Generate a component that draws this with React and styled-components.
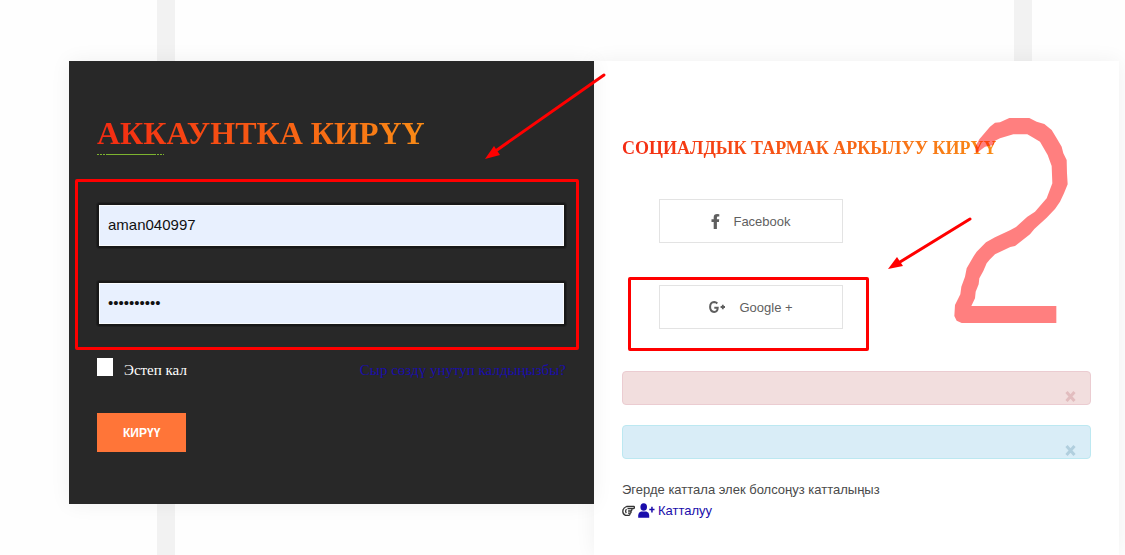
import styled, { createGlobalStyle } from 'styled-components';

const GlobalStyle = createGlobalStyle`
  *, *::before, *::after {
    box-sizing: border-box;
  }
  body {
    margin: 0;
    background: #fefefe;
    color: #4a4a4a;
    font-family: 'Liberation Sans', Arial, sans-serif;
    font-size: 13px;
    line-height: 21px;
  }
`;

const serif = "'Liberation Serif', 'Times New Roman', serif";

const Page = styled.div`
  position: relative;
  isolation: isolate;
  display: grid;
  grid-template-columns: 1fr 1fr;
  min-height: 100vh;
  padding: 61px 6px 0 69px;
  overflow: hidden;
`;

const Stripes = styled.div`
  position: absolute;
  inset: 0;
  z-index: -1;
  display: flex;
  justify-content: space-between;
  padding: 0 93px 0 157px;
`;

const Stripe = styled.div`
  width: 18px;
  background: #f2f2f2;
`;

const Panel = styled.section`
  position: relative;
  padding: 0 28px;
  box-shadow: 0 0 20px rgba(0, 0, 0, 0.06);
`;

const LoginPanel = styled(Panel)`
  z-index: 1;
  align-self: start;
  padding-top: 51px;
  padding-bottom: 52px;
  background: #282828;
  color: #fff;
  font-family: ${serif};
`;

const SocialPanel = styled(Panel)`
  padding-top: 75px;
  background: #fff;
`;

const Title = styled.h1`
  width: fit-content;
  margin: 0;
  background: linear-gradient(90deg, #f42a12, #f98b16);
  background-clip: text;
  color: transparent;
  font-family: ${serif};
  font-size: 32px;
  font-weight: 700;
  line-height: 42px;
  white-space: nowrap;
`;

const Subtitle = styled(Title).attrs({ as: 'h2' })`
  font-size: 18px;
  line-height: 24px;
`;

const Underline = styled.div`
  width: 67px;
  height: 1px;
  background:
    linear-gradient(#7db32f, #7db32f) center / 48px 1px no-repeat,
    repeating-linear-gradient(90deg, #7db32f 0 2px, transparent 2px 3px);
`;

const Fields = styled.div`
  position: relative;
  display: grid;
  gap: 33px;
  margin: 48px 0 32px;
`;

const Input = styled.input`
  width: 100%;
  height: 45px;
  padding: 0 9px 2px;
  border: 2px solid #181818;
  border-radius: 2px;
  outline: 1px solid #202020;
  background: #e8f0fe;
  box-shadow: inset 0 0 0 1px #f8fafc;
  color: #111;
  font-family: 'Liberation Sans', Arial, sans-serif;
  font-size: 15px;
`;

const Frame = styled.div`
  position: absolute;
  inset: ${({ $inset }) => $inset};
  border: 3px solid #f00;
  border-radius: 2px;
  pointer-events: none;
`;

const Drawing = styled.svg`
  position: absolute;
  top: ${({ $top }) => $top}px;
  left: ${({ $left }) => $left}px;
  overflow: visible;
  pointer-events: none;
`;

const Options = styled.div`
  display: flex;
  justify-content: space-between;
  font-size: 15px;
  line-height: 25px;
`;

const Remember = styled.label`
  display: flex;
  gap: 11px;
`;

const Checkbox = styled.input`
  appearance: none;
  width: 16px;
  height: 18px;
  margin: 0;
  background: #fff;
`;

const Link = styled.a`
  color: #1a0dab;
  text-decoration: none;
`;

const Submit = styled.button`
  display: block;
  height: 39px;
  margin-top: 30px;
  padding: 0 26px;
  border: 0;
  background: #ff7538;
  color: #fff;
  font-family: 'Liberation Sans', Arial, sans-serif;
  font-size: 12px;
  font-weight: 700;
`;

const SocialList = styled.div`
  display: grid;
  justify-items: start;
  gap: 42px;
  margin: 39px 0 42px;
  padding-left: 37px;
`;

const SocialItem = styled.div`
  position: relative;
`;

const SocialButton = styled.button`
  display: flex;
  align-items: center;
  justify-content: center;
  gap: 13px;
  width: 184px;
  height: 44px;
  border: 1px solid #e3e3e3;
  background: #fff;
  color: #5f5f5f;
  font-family: inherit;
  font-size: 13px;
`;

const Alert = styled.div`
  display: flex;
  align-items: end;
  justify-content: end;
  height: 34px;
  margin-bottom: 20px;
  padding: 0 14px 2px;
  border: 1px solid ${({ $border }) => $border};
  border-radius: 4px;
  background: ${({ $background }) => $background};
`;

const Close = styled.button`
  display: flex;
  padding: 0;
  border: 0;
  background: none;
  color: ${({ $color }) => $color};
`;

const Register = styled.p`
  margin: 0;
`;

const RegisterLine = styled.span`
  display: flex;
  align-items: center;
  gap: 3px;
`;

const RegisterLink = styled(Link)`
  display: flex;
  align-items: center;
  gap: 3px;
`;

function CloseButton({ color }) {
  return (
    <Close type="button" aria-label="Close" $color={color}>
      <svg width="11" height="11" viewBox="0 0 11 11" stroke="currentColor" strokeWidth="3">
        <path d="M1.5 1l8 9M9.500 1l-8 9" />
      </svg>
    </Close>
  );
}

function FacebookIcon() {
  return (
    <svg width="9" height="15" viewBox="0 0 9 15" fill="currentColor">
      <path d="M8.300.2v2.300H6.900Q5.900 2.500 5.900 3.700V5.300H8.200L7.900 7.900H5.900V15H2.700V7.900H.5V5.300H2.700V3.300Q2.700.1 6.100.1Q7.500.1 8.300.2Z" />
    </svg>
  );
}

function GooglePlusIcon() {
  return (
    <svg width="17" height="12" viewBox="0 0 17 12" fill="none" stroke="currentColor">
      <path d="M8.300 2.500Q7 1.100 5.200 1.100Q1.100 1.400 1.100 6T5.200 10.900Q8.600 10.800 8.700 6.700H5.300" strokeWidth="2" />
      <path d="M13.800 3.800v4.400M11.600 6H16" strokeWidth="1.800" />
    </svg>
  );
}

function HandIcon() {
  return (
    <svg width="13" height="12" viewBox="0 0 13 12" fill="none" stroke="#333" strokeWidth="1.300">
      <path d="M4.500 1.500h7.300q.8.200.6 1.200t-1 1H7.500M5.500 3.700h4q1 1.300-.4 2.300h-3M8.800 6q.8 1.400-.5 2.200H6M8 8.200q.3 1.600-1 2.200H3.500Q.8 9.500.8 6.300T4.500 1.500M4.500 4.200q-1.600 2-.2 4" />
    </svg>
  );
}

function UserPlusIcon() {
  return (
    <svg width="17" height="15" viewBox="0 0 17 15" fill="currentColor">
      <ellipse cx="5.700" cy="4" rx="3.300" ry="3.800" />
      <path d="M.2 14.700V12Q.3 9.300 3 8.600H8.400Q11.100 9.300 11.200 12V14.700Z" />
      <path d="M13.200 3.800h1.500v2h1.800v1.500h-1.800v2.100h-1.500V7.300h-1.900V5.800h1.900z" />
    </svg>
  );
}

function App() {
  return (
    <>
      <GlobalStyle />
      <Page>
        <Stripes>
          <Stripe />
          <Stripe />
        </Stripes>
        <LoginPanel>
          <Title>АККАУНТКА КИРҮҮ</Title>
          <Underline />
          <form onSubmit={(event) => event.preventDefault()}>
            <Fields>
              <Input type="text" aria-label="Логин" defaultValue="aman040997" />
              <Input type="password" aria-label="Сыр сөз" defaultValue="aman040997" />
              <Frame $inset="-24px -13px -24px -22px" />
            </Fields>
            <Options>
              <Remember>
                <Checkbox type="checkbox" />
                Эстеп кал
              </Remember>
              <Link href="#reset">Сыр сөздү унутуп калдыңызбы?</Link>
            </Options>
            <Submit type="submit">КИРҮҮ</Submit>
          </form>
          <Drawing $top={12} $left={416} width="122" height="88">
            <path d="M119 2L12 77" stroke="#f00" strokeWidth="3" strokeLinecap="round" />
            <path d="M0 86L9 73L15 82Z" fill="#f00" />
          </Drawing>
        </LoginPanel>
        <SocialPanel>
          <Subtitle>СОЦИАЛДЫК ТАРМАК АРКЫЛУУ КИРҮҮ</Subtitle>
          <SocialList>
            <SocialItem>
              <SocialButton type="button">
                <FacebookIcon />
                Facebook
              </SocialButton>
            </SocialItem>
            <SocialItem>
              <SocialButton type="button">
                <GooglePlusIcon />
                Google +
              </SocialButton>
              <Frame $inset="-8px -26px -22px -31px" />
            </SocialItem>
          </SocialList>
          <Alert $background="#f2dede" $border="#ebccd1">
            <CloseButton color="#e2bdbf" />
          </Alert>
          <Alert $background="#d9edf7" $border="#bce8f1">
            <CloseButton color="#b1cfde" />
          </Alert>
          <Register>
            Эгерде каттала элек болсоңуз катталыңыз
            <RegisterLine>
              <HandIcon />
              <RegisterLink href="#register">
                <UserPlusIcon />
                Катталуу
              </RegisterLink>
            </RegisterLine>
          </Register>
          <Drawing $top={156} $left={294} width="84" height="54">
            <path d="M82 2L12 45" stroke="#f00" strokeWidth="3" strokeLinecap="round" />
            <path d="M0 52L9 40L15 49Z" fill="#f00" />
          </Drawing>
          <Drawing $top={56} $left={360} width="114" height="207" viewBox="42 36 342 621">
            <path
              d="M108 143L106 125L118 103L150 65L165 53L180 52L208 39H268L290 50L313 57L335 75L350 100L365 125L370 145L380 165L381 205L383 238L372 265L360 290L345 312L320 338L283 372L270 388L225 423L211 426L165 448L150 463L140 475L130 498L118 520L116 538L107 560L105 580L94 603H349V654H65L50 647L43 633L45 600L61 568L64 545L75 515L80 490L100 455L110 440L138 412L165 397L210 376L228 366L262 335L285 320L320 280L337 235L335 183L323 150L300 110L280 98L262 88H220L180 100L165 107L160 120L135 125L115 140Z"
              fill="#f00"
              opacity="0.5"
            />
          </Drawing>
        </SocialPanel>
      </Page>
    </>
  );
}

export default App;
